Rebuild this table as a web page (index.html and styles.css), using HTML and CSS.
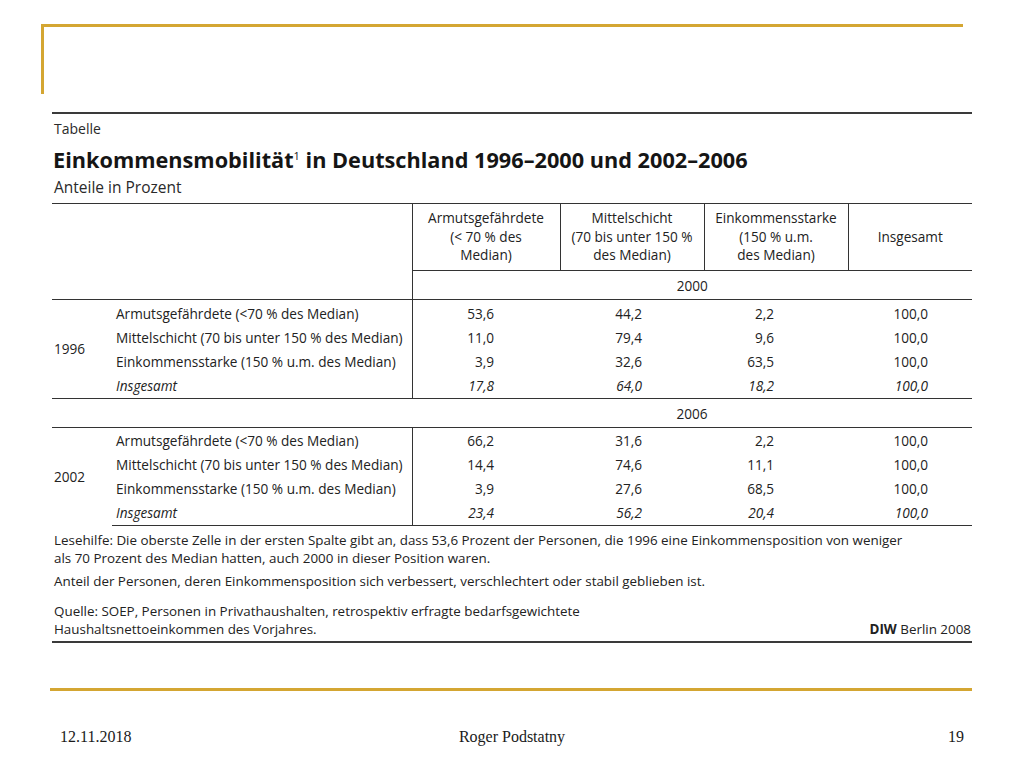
FILE: index.html
```html
<!DOCTYPE html>
<html lang="de">
<head>
<meta charset="utf-8">
<title>Einkommensmobilität</title>
<link rel="stylesheet" href="styles.css">
</head>
<body>
<div class="slide">
  <div class="title-frame"></div>

  <div class="figure">
    <div class="kicker">Tabelle</div>
    <div class="headline">Einkommensmobilität<sup>1</sup> in Deutschland 1996–2000 und 2002–2006</div>
    <div class="subline">Anteile in Prozent</div>

    <table class="data">
      <colgroup>
        <col class="c-year"><col class="c-label"><col class="c-n1"><col class="c-n2"><col class="c-n3"><col class="c-n4">
      </colgroup>
      <tr class="head">
        <td></td>
        <td class="vl"></td>
        <th class="hb vr">Armutsgefährdete<br>(&lt; 70 % des<br>Median)</th>
        <th class="hb vr">Mittelschicht<br>(70 bis unter 150 %<br>des Median)</th>
        <th class="hb vr">Einkommensstarke<br>(150 % u.m.<br>des Median)</th>
        <th class="hb">Insgesamt</th>
      </tr>
      <tr class="period">
        <td colspan="2" class="vl"></td>
        <td colspan="4">2000</td>
      </tr>
      <tr class="first">
        <td rowspan="4" class="year">1996</td>
        <td class="label vl">Armutsgefährdete (&lt;70 % des Median)</td>
        <td class="n n1">53,6</td><td class="n n2">44,2</td><td class="n n3">2,2</td><td class="n n4">100,0</td>
      </tr>
      <tr>
        <td class="label vl">Mittelschicht (70 bis unter 150 % des Median)</td>
        <td class="n n1">11,0</td><td class="n n2">79,4</td><td class="n n3">9,6</td><td class="n n4">100,0</td>
      </tr>
      <tr>
        <td class="label vl">Einkommensstarke (150 % u.m. des Median)</td>
        <td class="n n1">3,9</td><td class="n n2">32,6</td><td class="n n3">63,5</td><td class="n n4">100,0</td>
      </tr>
      <tr class="total last">
        <td class="label vl">Insgesamt</td>
        <td class="n n1">17,8</td><td class="n n2">64,0</td><td class="n n3">18,2</td><td class="n n4">100,0</td>
      </tr>
      <tr class="period full">
        <td colspan="2"></td>
        <td colspan="4">2006</td>
      </tr>
      <tr class="first second">
        <td rowspan="4" class="year">2002</td>
        <td class="label vl">Armutsgefährdete (&lt;70 % des Median)</td>
        <td class="n n1">66,2</td><td class="n n2">31,6</td><td class="n n3">2,2</td><td class="n n4">100,0</td>
      </tr>
      <tr>
        <td class="label vl">Mittelschicht (70 bis unter 150 % des Median)</td>
        <td class="n n1">14,4</td><td class="n n2">74,6</td><td class="n n3">11,1</td><td class="n n4">100,0</td>
      </tr>
      <tr>
        <td class="label vl">Einkommensstarke (150 % u.m. des Median)</td>
        <td class="n n1">3,9</td><td class="n n2">27,6</td><td class="n n3">68,5</td><td class="n n4">100,0</td>
      </tr>
      <tr class="total last">
        <td class="label vl">Insgesamt</td>
        <td class="n n1">23,4</td><td class="n n2">56,2</td><td class="n n3">20,4</td><td class="n n4">100,0</td>
      </tr>
    </table>

    <div class="notes">
      <p class="note">Lesehilfe: Die oberste Zelle in der ersten Spalte gibt an, dass 53,6 Prozent der Personen, die 1996 eine Einkommensposition von weniger<br>als 70 Prozent des Median hatten, auch 2000 in dieser Position waren.</p>
      <p class="note gap-s">Anteil der Personen, deren Einkommensposition sich verbessert, verschlechtert oder stabil geblieben ist.</p>
      <div class="source">
        <p class="note">Quelle: SOEP, Personen in Privathaushalten, retrospektiv erfragte bedarfsgewichtete<br>Haushaltsnettoeinkommen des Vorjahres.</p>
        <p class="note credit"><b>DIW</b> Berlin 2008</p>
      </div>
    </div>
  </div>

  <div class="rule"></div>

  <div class="footer">
    <span class="f-left">12.11.2018</span>
    <span class="f-mid">Roger Podstatny</span>
    <span class="f-right">19</span>
  </div>
</div>
</body>
</html>
```

FILE: styles.css
```css
* { box-sizing: border-box; }
html, body { margin: 0; padding: 0; background: #ffffff; }

.slide {
  width: 1024px;
  height: 768px;
  display: flex;
  flex-direction: column;
  overflow: hidden;
  background: #ffffff;
}

.title-frame {
  margin: 24px 0 0 41px;
  width: 922px;
  height: 70px;
  border-top: 3px solid #d4a632;
  border-left: 3px solid #d4a632;
}

.figure {
  margin: 18px 0 0 52px;
  width: 920px;
  font-family: "Open Sans", "DejaVu Sans", sans-serif;
  color: #1e1e1e;
  border-top: 2px solid #3a3a3a;
  border-bottom: 2px solid #3a3a3a;
}

.kicker {
  font-size: 14px;
  line-height: 18px;
  padding: 6px 0 0 2px;
  color: #2a2a2a;
}

.headline {
  font-size: 21.7px;
  font-weight: 700;
  line-height: 26px;
  margin-top: 9px;
  padding-left: 1px;
  color: #151515;
}
.headline sup {
  font-size: 11px;
  font-weight: 400;
  vertical-align: 8px;
  line-height: 0;
}

.subline {
  font-size: 15.5px;
  line-height: 20px;
  margin-top: 4px;
  padding-left: 2px;
  color: #2a2a2a;
}

.data {
  margin-top: 6px;
  width: 920px;
  table-layout: fixed;
  border-collapse: collapse;
  font-size: 13.6px;
  color: #222;
}
.c-year { width: 60px; }
.c-label { width: 300px; }
.c-n1 { width: 148px; }
.c-n2 { width: 144px; }
.c-n3 { width: 144px; }
.c-n4 { width: 124px; }

.data td, .data th { padding: 0; font-weight: 400; }

.head td, .head th {
  border-top: 1px solid #333;
  height: 67px;
  text-align: center;
  vertical-align: middle;
  line-height: 18.5px;
}
.head .hb { border-bottom: 1px solid #333; }
.vr { border-right: 1px solid #333; }
.vl { border-right: 1px solid #333; }

.period td {
  height: 29px;
  text-align: center;
  vertical-align: middle;
  border-bottom: 1px solid #333;
}
.period.full td { border-top: 1px solid #333; }

.data tr:not(.head):not(.period) td {
  height: 24px;
  line-height: 24px;
}
.data tr.first td { padding-top: 2px; height: 26px; }
.data tr.second td { padding-top: 1px; height: 25px; }
.data tr.first td.year { padding-top: 0; }
.data tr.last td { border-bottom: 1px solid #333; }

.year {
  vertical-align: middle;
  padding-left: 2px !important;
  text-align: left;
}
.label { padding-left: 4px !important; white-space: nowrap; }
.n { text-align: right; }
.n1 { padding-right: 66px !important; }
.n2 { padding-right: 62px !important; }
.n3 { padding-right: 74px !important; }
.n4 { padding-right: 44px !important; }
.total td { font-style: italic; }

.notes {
  padding: 5px 0 3px 2px;
  font-size: 13.4px;
  line-height: 18px;
  color: #222;
}
.note { margin: 0; }
.gap-s { margin-top: 5px; }
.source {
  margin-top: 12px;
  display: flex;
  justify-content: space-between;
  align-items: flex-end;
}
.credit { padding-right: 1px; }
.credit b { font-weight: 700; }

.rule {
  margin: 45px 0 0 50px;
  width: 922px;
  height: 3px;
  background: #d4a632;
}

.footer {
  margin: 36px 60px 0 60px;
  display: grid;
  grid-template-columns: 1fr auto 1fr;
  font-family: "Liberation Serif", "Times New Roman", serif;
  font-size: 16px;
  line-height: 20px;
  color: #1a1a1a;
}
.f-left { justify-self: start; }
.f-mid { justify-self: center; }
.f-right { justify-self: end; }
```
